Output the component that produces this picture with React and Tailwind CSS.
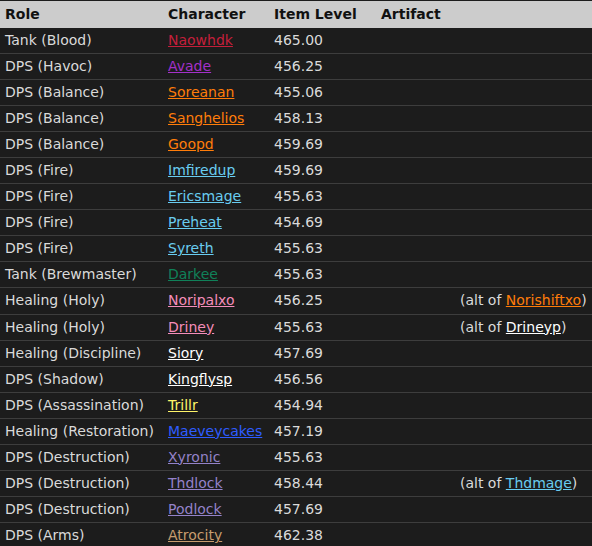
import React from 'react';

const C = {
  dk: 'text-[#c41f3b]',
  dh: 'text-[#a330c9]',
  druid: 'text-[#ff7d0a]',
  mage: 'text-[#69ccf0]',
  monk: 'text-[#108059]',
  pally: 'text-[#f58cba]',
  priest: 'text-[#ffffff]',
  rogue: 'text-[#fff569]',
  shaman: 'text-[#2e5cff]',
  lock: 'text-[#9482c9]',
  warrior: 'text-[#c79c6e]',
};

const rows = [
  ['Tank (Blood)', 'Naowhdk', C.dk, '465.00'],
  ['DPS (Havoc)', 'Avade', C.dh, '456.25'],
  ['DPS (Balance)', 'Soreanan', C.druid, '455.06'],
  ['DPS (Balance)', 'Sanghelios', C.druid, '458.13'],
  ['DPS (Balance)', 'Goopd', C.druid, '459.69'],
  ['DPS (Fire)', 'Imfiredup', C.mage, '459.69'],
  ['DPS (Fire)', 'Ericsmage', C.mage, '455.63'],
  ['DPS (Fire)', 'Preheat', C.mage, '454.69'],
  ['DPS (Fire)', 'Syreth', C.mage, '455.63'],
  ['Tank (Brewmaster)', 'Darkee', C.monk, '455.63'],
  ['Healing (Holy)', 'Noripalxo', C.pally, '456.25', ['Norishiftxo', C.druid]],
  ['Healing (Holy)', 'Driney', C.pally, '455.63', ['Drineyp', C.priest]],
  ['Healing (Discipline)', 'Siory', C.priest, '457.69'],
  ['DPS (Shadow)', 'Kingflysp', C.priest, '456.56'],
  ['DPS (Assassination)', 'Trillr', C.rogue, '454.94'],
  ['Healing (Restoration)', 'Maeveycakes', C.shaman, '457.19'],
  ['DPS (Destruction)', 'Xyronic', C.lock, '455.63'],
  ['DPS (Destruction)', 'Thdlock', C.lock, '458.44', ['Thdmage', C.mage]],
  ['DPS (Destruction)', 'Podlock', C.lock, '457.69'],
  ['DPS (Arms)', 'Atrocity', C.warrior, '462.38'],
];

export default function App() {
  return (
    <div className="w-[592px] h-[546px] overflow-hidden bg-[#1c1c1c] text-[14px] text-[#dadada] font-['DejaVu_Sans',sans-serif]">
      <table className="w-full table-fixed border-collapse">
        <colgroup>
          <col className="w-[163px]" />
          <col className="w-[106px]" />
          <col className="w-[107px]" />
          <col className="w-[79px]" />
          <col />
        </colgroup>
        <thead>
          <tr className="h-[27px] bg-[#cccccc] text-[#111] border-t border-[#1c1c1c]">
            <th className="px-[5px] text-left font-bold">Role</th>
            <th className="px-[5px] text-left font-bold">Character</th>
            <th className="px-[5px] text-left font-bold">Item Level</th>
            <th className="px-[5px] text-left font-bold">Artifact</th>
            <th />
          </tr>
        </thead>
        <tbody>
          {rows.map(([role, name, color, ilvl, alt], i) => (
            <tr key={i} className="h-[26.06px] border-t border-[#3d3d3d] first:border-t-0">
              <td className="px-[5px] whitespace-nowrap">{role}</td>
              <td className="px-[5px] whitespace-nowrap">
                <a href="#" className={`${color} underline`}>{name}</a>
              </td>
              <td className="px-[5px]">{ilvl}</td>
              <td className="px-[5px]" />
              <td className="px-[5px] whitespace-nowrap">
                {alt && (
                  <>
                    (alt of <a href="#" className={`${alt[1]} underline`}>{alt[0]}</a>)
                  </>
                )}
              </td>
            </tr>
          ))}
        </tbody>
      </table>
    </div>
  );
}
